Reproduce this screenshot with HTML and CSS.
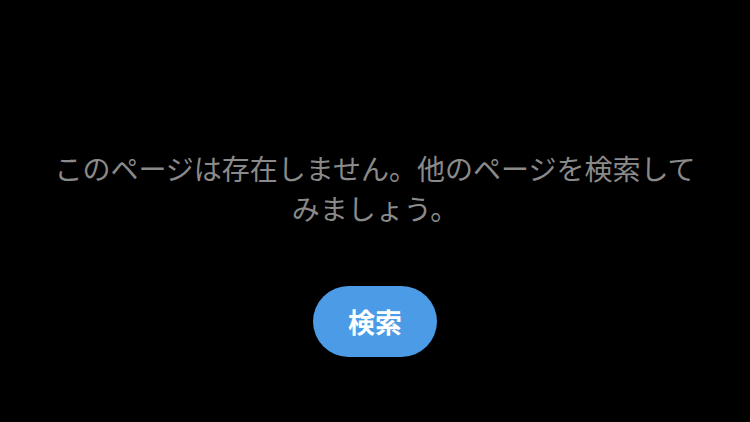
FILE: index.html
```html
<!DOCTYPE html>
<html lang="ja">
<head>
<meta charset="utf-8">
<link rel="stylesheet" href="styles.css">
</head>
<body>
<main class="page">
  <p class="message">このページは存在しません。他のページを検索してみましょう。</p>
  <button class="search-btn" type="button">検索</button>
</main>
</body>
</html>
```
FILE: styles.css
```css
html, body {
  margin: 0;
  padding: 0;
  background: #000;
}
.page {
  width: 750px;
  height: 422px;
  display: flex;
  flex-direction: column;
  align-items: center;
  padding-top: 148px;
  box-sizing: border-box;
  font-family: "Noto Sans CJK JP", "Noto Sans", sans-serif;
}
.message {
  margin: 0;
  max-width: 655px;
  text-align: center;
  font-size: 28px;
  line-height: 40px;
  color: #8a8a8a;
}
.search-btn {
  margin-top: 58px;
  width: 124px;
  height: 71px;
  border: none;
  border-radius: 36px;
  background: #4b9be6;
  color: #fff;
  font-family: "Noto Sans CJK JP", "Noto Sans", sans-serif;
  font-size: 27px;
  font-weight: 700;
  padding: 0;
}
```
